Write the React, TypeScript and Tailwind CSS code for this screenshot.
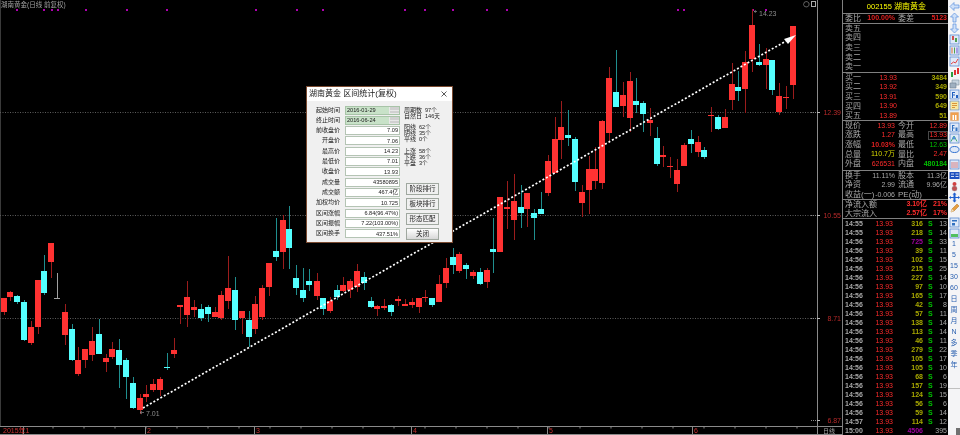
const CJK = "font-['Liberation_Sans','Noto_Sans_CJK_SC',sans-serif]";

type Candle = [number, number, number, number, number, number];

// x, kind (0 red, 1 cyan, 2 grey), wick top, wick bottom, body top, body bottom
const left: Candle[] = [
  [11, 0, 205, 255, 205, 247], [31, 0, 183, 212, 186, 201], [51, 1, 195, 222, 198, 216], [72, 1, 210, 332, 217, 329],
  [92, 0, 272, 344, 291, 339], [113, 0, 150, 312, 150, 291], [133, 1, 76, 196, 124, 190], [153, 0, 39, 143, 39, 97],
  [172, 2, 129, 206, 205, 207], [194, 0, 222, 346, 247, 314], [215, 1, 282, 393, 298, 391], [235, 0, 350, 437, 391, 432],
  [256, 0, 358, 416, 358, 390], [277, 0, 291, 394, 333, 374], [297, 1, 268, 374, 312, 372], [318, 0, 373, 428, 385, 395],
  [337, 0, 336, 386, 358, 380], [358, 1, 328, 476, 360, 405], [378, 1, 384, 506, 390, 441], [399, 1, 441, 536, 460, 534],
  [419, 0, 492, 552, 503, 539], [439, 0, 465, 516, 492, 502], [459, 0, 448, 486, 463, 479], [481, 0, 442, 500, 448, 480],
  [500, 1, 370, 422, 411, 414], [521, 0, 325, 384, 360, 372], [541, 0, 225, 281, 225, 231], [562, 0, 153, 290, 201, 254],
  [583, 0, 210, 262, 232, 240], [603, 1, 222, 272, 237, 264], [623, 1, 226, 276, 231, 253], [644, 0, 232, 262, 247, 261],
  [664, 0, 184, 270, 196, 264], [685, 0, 78, 238, 175, 212], [705, 1, 141, 299, 181, 269], [725, 0, 244, 314, 244, 264],
  [746, 1, 244, 352, 270, 321], [766, 0, 198, 312, 223, 296], [787, 0, 166, 270, 174, 262], [807, 0, 100, 198, 100, 171],
  [827, 1, -36, 92, 64, 80],
];
const middle: Candle[] = [
  [8, 0, -45, 117, -30, 67], [28, 1, -72, 117, -3, 55], [48, 1, 106, 196, 144, 173], [68, 1, 115, 218, 181, 203],
  [88, 1, 117, 182, 153, 165], [110, 0, 130, 212, 153, 197], [130, 1, 204, 256, 204, 237], [150, 0, 200, 247, 213, 243],
  [170, 1, 166, 212, 180, 200], [190, 0, 140, 186, 165, 184], [211, 0, 148, 205, 154, 180], [231, 0, 102, 185, 123, 170],
  [252, 1, 126, 180, 142, 158], [272, 1, 200, 234, 213, 230], [292, 0, 226, 260, 229, 238], [313, 0, 208, 240, 229, 233],
  [333, 1, 222, 257, 226, 245], [354, 0, 198, 228, 208, 214], [374, 0, 208, 228, 222, 227], [395, 0, 205, 234, 217, 225],
  [416, 0, 204, 248, 204, 231], [436, 0, 180, 215, 201, 203], [457, 1, 204, 230, 204, 225], [478, 0, 136, 216, 162, 215],
  [498, 0, 84, 174, 114, 160], [518, 1, 54, 132, 82, 104], [538, 0, 66, 128, 73, 122], [558, 1, 98, 147, 105, 117],
  [579, 0, 120, 147, 127, 138], [599, 1, 114, 164, 127, 161], [620, 0, 115, 174, 120, 157], [640, 1, -36, 130, 58, 67],
  [660, 0, -99, 67, -99, 67],
];
const upper: Candle[] = [
  [171, 0, 424, 567, 501, 507], [191, 0, 402, 600, 483, 539], [212, 1, 436, 566, 502, 520], [232, 0, 459, 560, 459, 508],
  [253, 1, 507, 600, 519, 535], [273, 1, 457, 522, 508, 522], [293, 0, 345, 468, 363, 459], [314, 0, 232, 401, 297, 399],
  [334, 0, 183, 358, 261, 300], [355, 1, 210, 317, 285, 293], [375, 1, 291, 453, 297, 426], [395, 0, 435, 532, 457, 489],
  [416, 0, 347, 522, 387, 451], [436, 0, 320, 445, 387, 424], [457, 0, 240, 447, 244, 429], [478, 0, 81, 310, 114, 279],
  [498, 1, 30, 200, 157, 200], [518, 0, 126, 232, 166, 198],
];
const right: Candle[] = [
  [0, 0, 215, 395, 243, 353], [18, 1, 234, 340, 303, 315], [38, 1, 304, 398, 310, 342], [59, 0, 325, 408, 360, 370],
  [80, 1, 382, 500, 414, 491], [100, 0, 438, 502, 465, 470], [121, 0, 470, 534, 498, 501], [141, 0, 478, 578, 511, 552],
  [162, 0, 428, 497, 436, 497], [182, 1, 390, 458, 418, 432], [203, 0, 407, 470, 426, 456], [222, 1, 442, 479, 451, 471],
  [243, 0, 320, 394, 346, 349], [263, 1, 346, 392, 352, 386], [284, 0, 327, 383, 351, 383], [305, 0, 189, 330, 253, 299],
  [325, 1, 213, 303, 261, 273], [346, 0, 153, 338, 186, 268], [367, 0, 28, 216, 76, 176], [386, 1, 133, 200, 186, 194],
  [407, 0, 145, 268, 176, 195], [427, 1, 180, 286, 180, 269], [447, 0, 250, 345, 289, 336], [468, 0, 258, 326, 291, 294],
  [488, 0, 79, 297, 79, 254],
];

const place = (rows: Candle[], ox: number, oy: number): Candle[] =>
  rows.map(([x, k, a, b, c, d]) => [ox + x / 3, k, oy + a / 3, oy + b / 3, oy + c / 3, oy + d / 3]);

const candles = [
  ...place(left, 0, 230),
  ...place(middle, 280, 230),
  ...place(upper, 450, 40),
  ...place(right, 630, 0),
];

const bodyColor = ['#ff3232', '#54ffff', '#a0a0a0'];
const wickColor = ['#9c1c1c', '#1f8f8f', '#a0a0a0'];

const marks = [17, 44, 52, 58, 86, 127, 167, 256, 297, 323, 405, 425, 453, 487, 507, 678, 684, 753, 766];
const gridY = [112, 215, 318];
const priceLabels = [
  ['12.39', 112],
  ['10.55', 215],
  ['8.71', 318],
  ['6.87', 420],
] as const;
const months = [
  ['2015年1', 23, 3],
  ['2', 145, 147],
  ['3', 254, 256],
  ['4', 411, 413],
  ['5', 547, 549],
  ['6', 692, 694],
] as const;

function Chart() {
  return (
    <svg width={842} height={435} className="block" fontFamily="'Liberation Sans','Noto Sans CJK SC',sans-serif">
      <line x1={0.5} y1={0} x2={0.5} y2={426} stroke="#3a3a3a" />
      {gridY.map((y) => (
        <line key={y} x1={0} y1={y + 0.5} x2={817} y2={y + 0.5} stroke="#5c5c5c" strokeDasharray="1 1.5" />
      ))}
      {marks.map((x) => (
        <rect key={x} x={x - 1} y={9} width={2} height={2} fill="#b000b0" />
      ))}
      <g shapeRendering="crispEdges">
        {candles.map(([x, k, wt, wb, bt, bb], i) => {
          const cx = Math.round(x);
          const top = Math.round(bt);
          return (
            <g key={i}>
              <rect x={cx} y={Math.round(wt)} width={1} height={Math.round(wb - wt)} fill={wickColor[k]} />
              <rect x={cx - 3} y={top} width={6} height={Math.max(1, Math.round(bb) - top)} fill={bodyColor[k]} />
            </g>
          );
        })}
      </g>
      <line x1={143} y1={408} x2={786} y2={41} stroke="#ffffff" strokeWidth={1.7} strokeDasharray="2 2" />
      <polygon points="796,35 784,39 788,44" fill="#ffffff" />
      <g fill="#8c8c8c" fontSize={7}>
        <path d="M140 412.5h4M142 411l-2 1.5 2 1.5" fill="none" stroke="#8c8c8c" strokeWidth={0.7} />
        <text x={146} y={416}>7.01</text>
        <path d="M754 11.5h3M756 10.5l-2 1 2 1" fill="none" stroke="#8c8c8c" strokeWidth={0.7} />
        <text x={759} y={16}>14.23</text>
      </g>
      <path d="M804.5 2l2.5-0.5 2 1.5v2.5l-2 1.5-2.5-0.5-1-2z" fill="none" stroke="#777" strokeWidth={0.8} />
      <rect x={811.5} y={1.5} width={4} height={5} fill="none" stroke="#aaa" strokeWidth={1} />
      <line x1={817.5} y1={0} x2={817.5} y2={435} stroke="#8a8a8a" />
      {priceLabels.map(([text, y]) => (
        <g key={text}>
          <line x1={811} y1={y + 0.5} x2={817} y2={y + 0.5} stroke="#888" strokeDasharray="1 1" />
          <line x1={817} y1={y + 0.5} x2={820} y2={y + 0.5} stroke="#bbb" />
          <text x={841} y={y + 3} textAnchor="end" fontSize={7} fill="#b82a2a">
            {text}
          </text>
        </g>
      ))}
      <line x1={0} y1={426.5} x2={842} y2={426.5} stroke="#8a8a8a" />
      <line x1={0} y1={434.5} x2={842} y2={434.5} stroke="#8a8a8a" />
      {Array.from({ length: 25 }, (_, i) => (
        <line key={i} x1={53 + i * 31} y1={427} x2={53 + i * 31} y2={428.5} stroke="#888" />
      ))}
      {months.map(([label, tick, x]) => (
        <g key={label}>
          <line x1={tick + 0.5} y1={427} x2={tick + 0.5} y2={434} stroke="#8a8a8a" />
          <text x={x} y={433} fontSize={7} fill="#c83030">
            {label}
          </text>
        </g>
      ))}
      <text x={823} y={433} fontSize={6} fill="#a8a8a8">
        日线
      </text>
    </svg>
  );
}

const fields = [
  ['起始时间', '2016-01-29', true],
  ['终止时间', '2016-06-24', true],
  ['前收盘价', '7.09', false],
  ['开盘价', '7.06', false],
  ['最高价', '14.23', false],
  ['最低价', '7.01', false],
  ['收盘价', '13.93', false],
  ['成交量', '43580895', false],
  ['成交额', '467.4亿', false],
  ['加权均价', '10.725', false],
  ['区间涨幅', '6.84(96.47%)', false],
  ['区间振幅', '7.22(103.00%)', false],
  ['区间换手', '437.51%', false],
] as const;

const summary = [
  { mb: 'mb-[5px]', w: 'w-[20px]', rows: [['周期数', '97个'], ['自然日', '146天']] },
  { mb: 'mb-[6px]', w: 'w-[14px]', rows: [['阳线', '62个'], ['阴线', '35个'], ['平线', '0个']] },
  { mb: 'mb-0', w: 'w-[14px]', rows: [['上涨', '58个'], ['下跌', '36个'], ['平盘', '3个']] },
];

function Dialog() {
  return (
    <div className={`absolute left-[306px] top-[86px] flex h-[157px] w-[147px] flex-col border border-[#7a4a30] bg-[#f0f0f0] ${CJK}`}>
      <div className="flex h-[14px] items-center justify-between bg-white pl-[2px] pr-[5px] text-[8px] text-[#202020]">
        <span>湖南黄金 区间统计(复权)</span>
        <svg width={6} height={6} viewBox="0 0 6 6" stroke="#303030" strokeWidth={0.8}>
          <path d="M0.5 0.5l5 5M5.5 0.5l-5 5" />
        </svg>
      </div>
      <div className="flex pt-[4.5px]">
        <div className="flex w-[93px] flex-col">
          {fields.map(([label, value, date]) => (
            <div key={label} className="flex h-[10.33px] items-start">
              <span className="w-[33px] text-right text-[6px] leading-[9px] text-[#202020]">{label}</span>
              <div
                className={`ml-[5px] flex h-[9px] w-[55px] items-center justify-between border text-[5.6px] text-[#202020] ${
                  date ? 'border-[#a8c4a8] bg-[#c8e2c8]' : 'border-[#b4c4b4] bg-white'
                }`}
              >
                {date ? (
                  <>
                    <span className="pl-[1px]">{value}</span>
                    <span className="flex h-full w-[10px] flex-col gap-[1px] bg-[#e8e8e8] p-[0.5px]">
                      <span className="flex-1 bg-[#d0d0d0]" />
                      <span className="flex-1 bg-[#d0d0d0]" />
                    </span>
                  </>
                ) : (
                  <span className="ml-auto pr-[1px]">{value}</span>
                )}
              </div>
            </div>
          ))}
        </div>
        <div className="flex w-[50px] flex-col pl-[4px]">
          <div className="pt-[1px]">
            {summary.map((group, i) => (
              <div key={i} className={group.mb}>
                {group.rows.map(([label, value]) => (
                  <div key={label} className="flex h-[6px] items-center text-[6px] leading-[6px] text-[#202020]">
                    <span className={group.w}>{label}</span>
                    <span className="pl-[1px] text-[5.6px]">{value}</span>
                  </div>
                ))}
              </div>
            ))}
          </div>
          <div className="mt-[17px] flex flex-col gap-[2.5px] pl-[2px]">
            {['阶段排行', '板块排行', '形态匹配', '关闭'].map((label, i) => (
              <div
                key={label}
                className={`flex h-[12.5px] w-[33px] items-center justify-center border border-[#a0a8a0] text-[6.5px] text-[#202020] ${
                  i === 3 ? 'bg-gradient-to-b from-white to-[#d8d8d8]' : 'bg-[#f0f0f0]'
                }`}
              >
                {label}
              </div>
            ))}
          </div>
        </div>
      </div>
    </div>
  );
}

const GRAY = 'text-[#a8a8a8]';
const RED = 'text-[#ff2c2c]';
const OLIVE = 'text-[#a8a800]';
const GREEN = 'text-[#00c000]';
const PURPLE = 'text-[#a000a0]';

function BookRow({ label, price, vol }: { label: string; price?: string; vol?: string }) {
  return (
    <div className="flex h-[9.6px] items-center pl-[2px] pr-[1px]">
      <span className={`w-[32px] text-[8px] ${GRAY}`}>{label}</span>
      <span className={`w-[20px] text-right text-[7px] ${RED}`}>{price}</span>
      <span className={`flex-1 text-right text-[7px] font-bold ${OLIVE}`}>{vol}</span>
    </div>
  );
}

function StatRow({
  a,
  av,
  ac,
  b,
  bv,
  bc,
}: {
  a: string;
  av: string;
  ac: string;
  b: string;
  bv: string;
  bc: string;
}) {
  return (
    <div className="flex h-[9.6px] items-center pl-[2px] pr-[1px]">
      <span className={`w-[18px] shrink-0 whitespace-nowrap text-[8px] ${GRAY}`}>{a}</span>
      <span className={`w-[32px] shrink-0 text-right text-[7px] ${ac}`}>{av}</span>
      <span className={`w-[20px] shrink-0 whitespace-nowrap pl-[3px] text-[8px] ${GRAY}`}>{b}</span>
      <span className={`flex-1 whitespace-nowrap text-right text-[7px] ${bc}`}>{bv}</span>
    </div>
  );
}

const ticks: [string, string, string][] = [
  ['14:55', '316', '13'],
  ['14:55', '218', '14'],
  ['14:56', '725', '33'],
  ['14:56', '39', '11'],
  ['14:56', '102', '15'],
  ['14:56', '215', '25'],
  ['14:56', '227', '14'],
  ['14:56', '97', '10'],
  ['14:56', '165', '17'],
  ['14:56', '42', '8'],
  ['14:56', '57', '11'],
  ['14:56', '138', '14'],
  ['14:56', '113', '14'],
  ['14:56', '46', '11'],
  ['14:56', '279', '22'],
  ['14:56', '105', '17'],
  ['14:56', '105', '10'],
  ['14:56', '68', '6'],
  ['14:56', '157', '19'],
  ['14:56', '124', '15'],
  ['14:56', '56', '6'],
  ['14:56', '59', '14'],
  ['14:57', '114', '12'],
  ['15:00', '4506', '395'],
];

function QuotePanel() {
  const line = 'border-b border-[#808080]';
  return (
    <div className={`flex w-[106px] shrink-0 flex-col border-l border-[#808080] bg-black ${CJK}`}>
      <div className={`flex h-[14px] shrink-0 items-center justify-center pl-[2px] text-[8px] text-[#ffff00] ${line}`}>
        <span className="text-[7.5px]">002155</span>&nbsp;湖南黄金
      </div>
      <div className={`flex h-[10px] shrink-0 items-center pl-[2px] pr-[1px] ${line}`}>
        <span className={`w-[18px] text-[8px] ${GRAY}`}>委比</span>
        <span className="w-[32px] text-right text-[7px] font-bold text-[#e02020]">100.00%</span>
        <span className={`w-[20px] pl-[3px] text-[8px] ${GRAY}`}>委差</span>
        <span className="flex-1 text-right text-[7px] font-bold text-[#e02020]">5123</span>
      </div>
      <div className={`h-[49px] shrink-0 ${line}`}>
        {['卖五', '卖四', '卖三', '卖二', '卖一'].map((l) => (
          <BookRow key={l} label={l} />
        ))}
      </div>
      <div className={`h-[48px] shrink-0 ${line}`}>
        <BookRow label="买一" price="13.93" vol="3484" />
        <BookRow label="买二" price="13.92" vol="349" />
        <BookRow label="买三" price="13.91" vol="590" />
        <BookRow label="买四" price="13.90" vol="649" />
        <BookRow label="买五" price="13.89" vol="51" />
      </div>
      <div className={`h-[50px] shrink-0 ${line}`}>
        <StatRow a="现价" av="13.93" ac={RED} b="今开" bv="12.89" bc={RED} />
        <div className="relative">
          <StatRow a="涨跌" av="1.27" ac={RED} b="最高" bv="13.93" bc={RED} />
          <span className="absolute right-0 top-[0.5px] h-[9px] w-[20px] border border-[#484848]" />
        </div>
        <StatRow a="涨幅" av="10.03%" ac="font-bold text-[#e02020]" b="最低" bv="12.63" bc={GREEN} />
        <StatRow a="总量" av="110.7万" ac="text-[#d8d800]" b="量比" bv="2.47" bc={RED} />
        <StatRow a="外盘" av="626531" ac={RED} b="内盘" bv="480184" bc={`font-bold ${GREEN}`} />
      </div>
      <div className={`h-[29px] shrink-0 ${line}`}>
        <StatRow a="换手" av="11.11%" ac={GRAY} b="股本" bv="11.3亿" bc={GRAY} />
        <StatRow a="净资" av="2.99" ac={GRAY} b="流通" bv="9.96亿" bc={GRAY} />
        <StatRow a="收益(一)" av="-0.006" ac={GRAY} b="PE(动)" bv="-" bc={GRAY} />
      </div>
      <div className={`h-[19px] shrink-0 ${line}`}>
        {[
          ['净流入额', '3.10亿', '21%'],
          ['大宗流入', '2.57亿', '17%'],
        ].map(([l, v, p]) => (
          <div key={l} className="flex h-[9px] items-center pl-[2px] pr-[1px]">
            <span className={`w-[33px] text-[8px] ${GRAY}`}>{l}</span>
            <span className={`w-[49px] text-right text-[7px] font-bold ${RED}`}>{v}</span>
            <span className={`flex-1 text-right text-[7px] font-bold ${RED}`}>{p}</span>
          </div>
        ))}
      </div>
      <div className="pt-[1px]">
        {ticks.map(([time, vol, count], i) => (
          <div key={i} className="flex h-[8.97px] items-center pl-[2px] pr-[1px] text-[7px]">
            <span className={`w-[18px] font-bold ${GRAY}`}>{time}</span>
            <span className={`w-[30px] text-right ${RED}`}>13.93</span>
            <span className={`w-[30px] text-right font-bold ${vol === '725' || vol === '4506' ? PURPLE : OLIVE}`}>{vol}</span>
            <span className={`w-[10px] pl-[5px] font-bold ${GREEN}`}>{vol === '4506' ? '' : 'S'}</span>
            <span className={`flex-1 text-right ${GRAY}`}>{count}</span>
          </div>
        ))}
      </div>
    </div>
  );
}

function Tool({ kind }: { kind: string }) {
  const frame = <rect x={1} y={1} width={9} height={9} fill="#dfe9f8" stroke="#5a8ad0" strokeWidth={0.8} />;
  const art: Record<string, React.ReactNode> = {
    left: <path d="M1 5.5l4-4v2.5h5v3H5v2.5z" fill="#cfe0f8" stroke="#5a90e0" strokeWidth={0.7} />,
    up: <path d="M5.5 1l4 4H7v5H4V5H1.500z" fill="#cfe0f8" stroke="#5a90e0" strokeWidth={0.7} />,
    down: <path d="M5.500 10l4-4H7V1H4v5H1.500z" fill="#cfe0f8" stroke="#5a90e0" strokeWidth={0.7} />,
    mixed: <>{frame}<path d="M3 2h2v4H3z" fill="#d05050" /><path d="M6 4h2v4H6z" fill="#50a050" /></>,
    bars: <>{frame}<path d="M2.500 2.500h1v6h-1z" fill="#e07030" /><path d="M5 2.500h1v6H5z" fill="#50a050" /><path d="M7.500 2.500h1v6h-1z" fill="#7050d0" /></>,
    trend: <>{frame}<path d="M2 8l2.500-2 2 1L9 3" fill="none" stroke="#e03030" strokeWidth={0.9} /></>,
    candle: <><path d="M2 5h2v5H2z" fill="#30a040" /><path d="M5 3h2v5H5z" fill="#e03030" /><path d="M8 1h2v6H8z" fill="#e03030" /></>,
    stack: <><path d="M3 2h7v5H3z" fill="#c8d4e0" stroke="#8090a0" strokeWidth={0.6} /><path d="M1 5h6v5H1z" fill="#a0b0c0" stroke="#708090" strokeWidth={0.6} /></>,
    fa: <>{frame}<path d="M3 3h3v1H4v1.500h2v1H4V9H3z" fill="#2060c0" /><path d="M7 6h2v3H7z" fill="#2060c0" /></>,
    note: <><rect x={1} y={1} width={9} height={9} fill="#f8e8a0" stroke="#5a8ad0" strokeWidth={0.7} /><path d="M3 3.500h5M3 5.500h5M3 7.500h3" stroke="#d08020" strokeWidth={0.8} /></>,
    orange: <><rect x={1} y={1} width={9} height={9} fill="#f0a050" stroke="#d0d8e8" strokeWidth={0.7} /><path d="M3.500 9V4h1.500v5M6 9V4h1.500v5" fill="#fff" /></>,
    fn: <>{frame}<path d="M3 3h2.500v1H4v1.500h1.500v1H4V9H3z" fill="#3070c0" /><path d="M6.500 5.500h2V9h-2z" fill="#3070c0" /></>,
    net: <>{frame}<path d="M2 8.500L5 3l3 5.500" fill="none" stroke="#30a060" strokeWidth={0.9} /><circle cx={5} cy={5} r={1.500} fill="#5090e0" /></>,
    oval: <ellipse cx={5.500} cy={5.500} rx={4.500} ry={3} fill="#dfe9f8" stroke="#3070d0" strokeWidth={1} />,
    lines: <>{frame}<path d="M2 4h7M2 6h7M2 8h7" stroke="#d05050" strokeWidth={0.7} /></>,
    rb: <><rect x={0.500} y={2} width={10} height={7} fill="#2050c0" /><path d="M2 4h3M2 6.500h3M6.500 4h3M6.500 6.500h3" stroke="#fff" strokeWidth={0.8} /></>,
    coins: <><circle cx={5.500} cy={3} r={2} fill="#d04040" /><circle cx={5.500} cy={7.500} r={2.500} fill="#c05050" stroke="#888" strokeWidth={0.4} /></>,
    move: <path d="M5.500 0.500l2 2H6.500v2.500H9V4l2 1.500-2 1.500V6H6.500v2.500h1l-2 2-2-2h1V6H2v1L0 5.500 2 4v1h2.500V2.500h-1z" fill="#2060d0" />,
    pencil: <><path d="M2 9l1-3 5-5 2 2-5 5z" fill="#e8a040" stroke="#b07020" strokeWidth={0.5} /><path d="M2 9l1-3 2 2z" fill="#f0e0c0" /></>,
    page: <>{frame}<path d="M3 3h5v1.500H3zM3 6h3v2.500H3z" fill="#3070c0" /></>,
    green: <>{frame}<path d="M2 6h7v3H2z" fill="#50c060" /></>,
  };
  return (
    <svg width={11} height={11} viewBox="0 0 11 11">
      {art[kind]}
    </svg>
  );
}

const toolsA = ['left', 'up', 'down', 'mixed', 'bars', 'trend', 'candle', 'stack', 'fa', 'note', 'orange', 'fn', 'net', 'oval'];
const toolsB = ['lines', 'rb', 'coins', 'move', 'pencil'];
const toolsC = ['page', 'green'];
const periods = ['1', '5', '15', '30', '60', '日', '周', '月', 'N', '多', '季', '年'];

function Toolbar() {
  const row = 'flex h-[11px] items-center justify-center';
  return (
    <div className={`flex w-[12px] shrink-0 flex-col bg-[#f4f4f6] pt-[0.5px] ${CJK}`}>
      {toolsA.map((k) => (
        <div key={k} className={row}><Tool kind={k} /></div>
      ))}
      <div className="h-[4px]" />
      {toolsB.map((k) => (
        <div key={k} className={row}><Tool kind={k} /></div>
      ))}
      <div className="h-[3px]" />
      {toolsC.map((k) => (
        <div key={k} className={row}><Tool kind={k} /></div>
      ))}
      {periods.map((p) => (
        <div key={p} className={`${row} text-[7px] text-[#2a60b0]`}>{p}</div>
      ))}
      <div className="mt-[17px] border-t border-[#c0c0c0]" />
      <div className="mt-auto h-[7px] w-[4px] self-end bg-[#707070]" />
    </div>
  );
}

export default function App() {
  return (
    <div className="relative flex h-[435px] w-[960px] overflow-hidden bg-black blur-[0.3px]">
      <div className="relative w-[842px] shrink-0">
        <Chart />
        <span className={`absolute left-[1px] top-0 whitespace-nowrap text-[6.5px] leading-[9px] text-[#a0a0a0] ${CJK}`}>
          湖南黄金(日线 前复权)
        </span>
        <Dialog />
      </div>
      <QuotePanel />
      <Toolbar />
    </div>
  );
}
